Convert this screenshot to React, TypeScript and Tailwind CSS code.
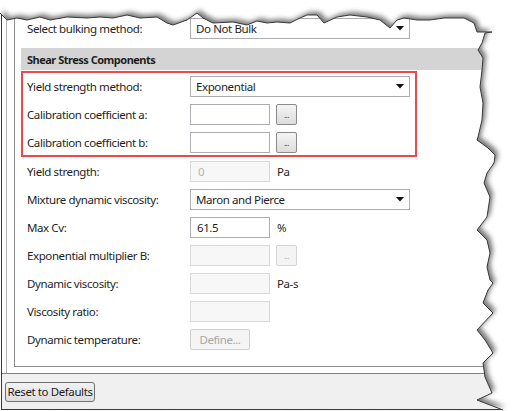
import React from 'react';

const TOP = [
  [0, 13], [7, 20], [17, 18], [27, 20], [40, 17], [50, 20], [67, 17], [87, 18], [100, 17], [113, 18],
  [127, 15], [140, 18], [157, 17], [167, 23], [173, 25], [187, 20], [197, 13], [203, 18], [213, 23],
  [233, 22], [247, 25], [257, 21], [267, 23], [277, 22], [290, 23], [300, 18], [307, 15], [317, 15],
  [324, 23], [337, 17], [350, 15], [367, 17], [380, 20], [390, 28], [397, 20], [404, 18], [417, 20],
  [430, 20], [444, 18], [464, 18], [474, 23], [477, 32], [492, 32],
];
const RIGHT = [
  [485, 33], [482, 43], [478, 50], [483, 58], [482, 70], [480, 87], [483, 103], [482, 120], [478, 137],
  [477, 140], [488, 148], [495, 155], [494, 163], [487, 173], [484, 183], [490, 197], [487, 217],
  [477, 230], [487, 240], [490, 253], [487, 267], [490, 280], [493, 283], [488, 290], [483, 303],
  [493, 313], [477, 330], [485, 340], [493, 353], [483, 363], [485, 377], [492, 393], [477, 400], [503, 410],
];
const edge = [...TOP, ...RIGHT].map(([x, y]) => `${x},${y}`).join(' L');
const pagePath = `M${edge} L0,411 Z`;
const outlinePath = `M${edge}`;

// torn paper edge drawn over the window
const TornEdge = () => (
  <svg className="absolute inset-0 pointer-events-none" width={514} height={411} viewBox="0 0 514 411">
    <defs>
      <clipPath id="outside">
        <path clipRule="evenodd" d={`M-10,-10 H524 V421 H-10 Z ${pagePath}`} />
      </clipPath>
      <filter id="blur" x="-10%" y="-10%" width="120%" height="120%">
        <feGaussianBlur stdDeviation="2.6" />
      </filter>
    </defs>
    <g clipPath="url(#outside)">
      <rect x={-10} y={-10} width={534} height={431} fill="#ffffff" />
      <path d={pagePath} transform="translate(3,-3)" fill="#4a4a4a" opacity={0.75} filter="url(#blur)" />
    </g>
    <path d={outlinePath} fill="none" stroke="#3a3a3a" strokeWidth={1} />
  </svg>
);

const Arrow = () => (
  <svg width="8" height="5" viewBox="0 0 8 5">
    <path d="M0 0 H8 L4 4.5 Z" fill="#111" />
  </svg>
);

const Select = ({ value }: { value: string }) => (
  <div className="w-[220px] h-[21px] border border-[#acacac] bg-white flex items-center justify-between pl-[5px] pr-[5px]">
    <span>{value}</span>
    <Arrow />
  </div>
);

const Input = ({ value, disabled }: { value?: string; disabled?: boolean }) => (
  <div
    className={
      disabled
        ? 'w-[80px] h-[21px] border border-[#d9d9d9] bg-[#f7f7f7] flex items-center pl-[7px] text-[#b4b4b4]'
        : 'w-[80px] h-[21px] border border-[#abadb3] bg-white flex items-center pl-[6px]'
    }
  >
    {value}
  </div>
);

const Dots = ({ disabled }: { disabled?: boolean }) => (
  <div
    className={
      disabled
        ? 'ml-[6px] w-[21px] h-[21px] rounded-[2px] border border-[#d5d5d5] bg-[#f4f4f4] flex items-end justify-center pb-[5px] text-[8px] leading-none text-[#b0b0b0]'
        : 'ml-[6px] w-[21px] h-[21px] rounded-[2px] border border-[#8a8a8a] bg-linear-to-b from-[#f4f4f4] to-[#dddddd] flex items-end justify-center pb-[5px] text-[8px] leading-none text-[#2a3a5a]'
    }
  >
    ...
  </div>
);

const Unit = ({ children }: { children: React.ReactNode }) => <span className="ml-[7px]">{children}</span>;

const Row = ({ label, inset, children }: { label: string; inset?: boolean; children: React.ReactNode }) => (
  <div className="flex items-center h-[21px]">
    <div className={inset ? 'w-[167px] pl-[4px]' : 'w-[169px] pl-[6px]'}>{label}</div>
    {children}
  </div>
);

export default function App() {
  return (
    <div className="relative w-[514px] h-[411px] bg-white overflow-hidden font-['Noto_Sans',sans-serif] text-[11.5px] tracking-[-0.4px] text-[#1e1e1e] leading-none">
      <div className="ml-[1px] h-[410px] border-l border-b border-[#3a3a3a] flex flex-col">
        <div className="h-[373px] flex pl-[4px]">
          <div className="flex-1 flex border-l border-[#b4b4b4] pl-[7px] pb-[6px]">
            <div className="flex-1 flex flex-col border-l border-b border-[#8c8c8c] pl-[6px] pt-[18px]">
              <Row label="Select bulking method:">
                <Select value="Do Not Bulk" />
              </Row>

              <div className="mt-[9px] h-[22px] bg-[#d4d4d4] flex items-center pl-[6px] font-bold text-[11px] tracking-[-0.5px]">
                Shear Stress Components
              </div>

              <div className="mt-[1px] w-[396px] border-2 border-[#f0484a] pt-[3px] pb-[2px] flex flex-col gap-[7px]">
                <Row label="Yield strength method:" inset>
                  <Select value="Exponential" />
                </Row>
                <Row label="Calibration coefficient a:" inset>
                  <Input />
                  <Dots />
                </Row>
                <Row label="Calibration coefficient b:" inset>
                  <Input />
                  <Dots />
                </Row>
              </div>

              <div className="mt-[4px] flex flex-col gap-[7px]">
                <Row label="Yield strength:">
                  <Input value="0" disabled />
                  <Unit>Pa</Unit>
                </Row>
                <Row label="Mixture dynamic viscosity:">
                  <Select value="Maron and Pierce" />
                </Row>
                <Row label="Max Cv:">
                  <Input value="61.5" />
                  <Unit>%</Unit>
                </Row>
                <Row label="Exponential multiplier B:">
                  <Input disabled />
                  <Dots disabled />
                </Row>
                <Row label="Dynamic viscosity:">
                  <Input disabled />
                  <Unit>Pa-s</Unit>
                </Row>
                <Row label="Viscosity ratio:">
                  <Input disabled />
                </Row>
                <Row label="Dynamic temperature:">
                  <div className="w-[60px] h-[21px] rounded-[2px] border border-[#cfcfcf] bg-[#f4f4f4] flex items-center justify-center text-[#a8a8a8]">
                    Define...
                  </div>
                </Row>
              </div>
            </div>
          </div>
        </div>

        <div className="flex-1 border-t border-[#828282] bg-[#f0f0f0] pl-[3px] pt-[8px]">
          <button className="w-[90px] h-[20px] rounded-[3px] border border-[#707070] bg-linear-to-b from-[#f2f2f2] to-[#dedede] flex items-center justify-center text-[#1e1e1e] tracking-[-0.4px]">
            Reset to Defaults
          </button>
        </div>
      </div>
      <TornEdge />
    </div>
  );
}
